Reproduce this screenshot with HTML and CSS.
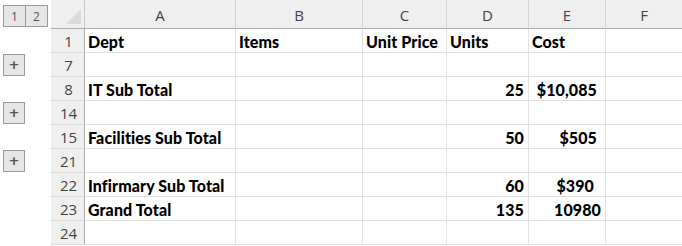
FILE: index.html
```html
<!DOCTYPE html>
<html>
<head>
<meta charset="utf-8">
<link rel="stylesheet" href="styles.css">
</head>
<body>
<div class="sheet">
  <div class="gutter">
    <div class="g-head">
      <span class="lvl">1</span><span class="lvl">2</span>
    </div>
    <div class="g-row"></div>
    <div class="g-row"><span class="plus">+</span></div>
    <div class="g-row"></div>
    <div class="g-row"><span class="plus">+</span></div>
    <div class="g-row"></div>
    <div class="g-row"><span class="plus">+</span></div>
    <div class="g-row"></div>
    <div class="g-row"></div>
    <div class="g-row"></div>
  </div>
  <div class="grid">
    <div class="corner"><span class="tri"></span></div>
    <div class="ch">A</div><div class="ch">B</div><div class="ch">C</div><div class="ch">D</div><div class="ch">E</div><div class="ch last">F</div>

    <div class="rh">1</div><div class="c">Dept</div><div class="c">Items</div><div class="c">Unit Price</div><div class="c">Units</div><div class="c">Cost</div><div class="c last"></div>
    <div class="rh">7</div><div class="c"></div><div class="c"></div><div class="c"></div><div class="c"></div><div class="c"></div><div class="c last"></div>
    <div class="rh">8</div><div class="c">IT Sub Total</div><div class="c"></div><div class="c"></div><div class="c num">25</div><div class="c num acc">$10,085</div><div class="c last"></div>
    <div class="rh">14</div><div class="c"></div><div class="c"></div><div class="c"></div><div class="c"></div><div class="c"></div><div class="c last"></div>
    <div class="rh">15</div><div class="c">Facilities Sub Total</div><div class="c"></div><div class="c"></div><div class="c num">50</div><div class="c num acc">$505</div><div class="c last"></div>
    <div class="rh">21</div><div class="c"></div><div class="c"></div><div class="c"></div><div class="c"></div><div class="c"></div><div class="c last"></div>
    <div class="rh">22</div><div class="c">Infirmary Sub Total</div><div class="c"></div><div class="c"></div><div class="c num">60</div><div class="c num acc2">$390</div><div class="c last"></div>
    <div class="rh">23</div><div class="c">Grand Total</div><div class="c"></div><div class="c"></div><div class="c num">135</div><div class="c num">10980</div><div class="c last"></div>
    <div class="rh">24</div><div class="c"></div><div class="c"></div><div class="c"></div><div class="c"></div><div class="c"></div><div class="c last"></div>
  </div>
</div>
</body>
</html>
```
FILE: styles.css
```css
* { box-sizing: border-box; }
html, body { margin: 0; padding: 0; background: #ffffff; }
body { width: 682px; height: 246px; overflow: hidden; }

.sheet {
  display: flex;
  align-items: flex-start;
}

.gutter {
  width: 51px;
  flex: none;
  display: flex;
  flex-direction: column;
}
.g-head {
  height: 29px;
  display: flex;
  padding: 5px 0 0 3px;
}
.lvl {
  width: 23px;
  height: 22px;
  border: 1px solid #9a9a9a;
  background: #e6e6e6;
  color: #555;
  font: 12px "Open Sans", "DejaVu Sans", sans-serif;
  display: flex;
  align-items: center;
  justify-content: center;
}
.lvl + .lvl { margin-left: -1px; }
.g-row {
  height: 24px;
  padding: 0 0 0 3px;
  display: flex;
  align-items: center;
}
.plus {
  width: 22px;
  height: 22px;
  border: 1px solid #9a9a9a;
  background: #e6e6e6;
  color: #555;
  font: bold 13px "DejaVu Sans", sans-serif;
  display: flex;
  align-items: center;
  justify-content: center;
  margin-top: -1px;
}

.grid {
  flex: 1;
  display: grid;
  grid-template-columns: 34px 151px 127px 84px 82px 77px 1fr;
  grid-template-rows: 29px repeat(9, 24px);
}

.corner {
  background: #efefef;
  border-right: 1px solid #c8c8c8;
  border-bottom: 1px solid #ababab;
  position: relative;
}
.tri {
  position: absolute;
  right: 3px;
  bottom: 4px;
  width: 0;
  height: 0;
  border-left: 15px solid transparent;
  border-bottom: 15px solid #dadada;
}

.ch {
  background: #efefef;
  border-right: 1px solid #d4d4d4;
  border-bottom: 1px solid #ababab;
  color: #444;
  font: 15px "Open Sans", "DejaVu Sans", sans-serif;
  display: flex;
  align-items: center;
  justify-content: center;
  padding-top: 2px;
}
.ch.last { border-right: none; }

.rh {
  background: #efefef;
  border-right: 1px solid #ababab;
  border-bottom: 1px solid #d9d9d9;
  color: #444;
  font: 15px "Open Sans", "DejaVu Sans", sans-serif;
  display: flex;
  align-items: center;
  justify-content: center;
  padding-left: 2px;
}

.c {
  border-right: 1px solid #e1e1e1;
  border-bottom: 1px solid #e1e1e1;
  font: 900 16px "Lato", "Liberation Sans", sans-serif;
  letter-spacing: 0.1px;
  color: #000;
  display: flex;
  align-items: center;
  padding: 1px 3px 0 3px;
  white-space: nowrap;
}
.c.last { border-right: none; }
.num { justify-content: flex-end; padding-right: 4px; }
.acc { padding-right: 8px; }
.acc2 { padding-right: 11px; }
```
